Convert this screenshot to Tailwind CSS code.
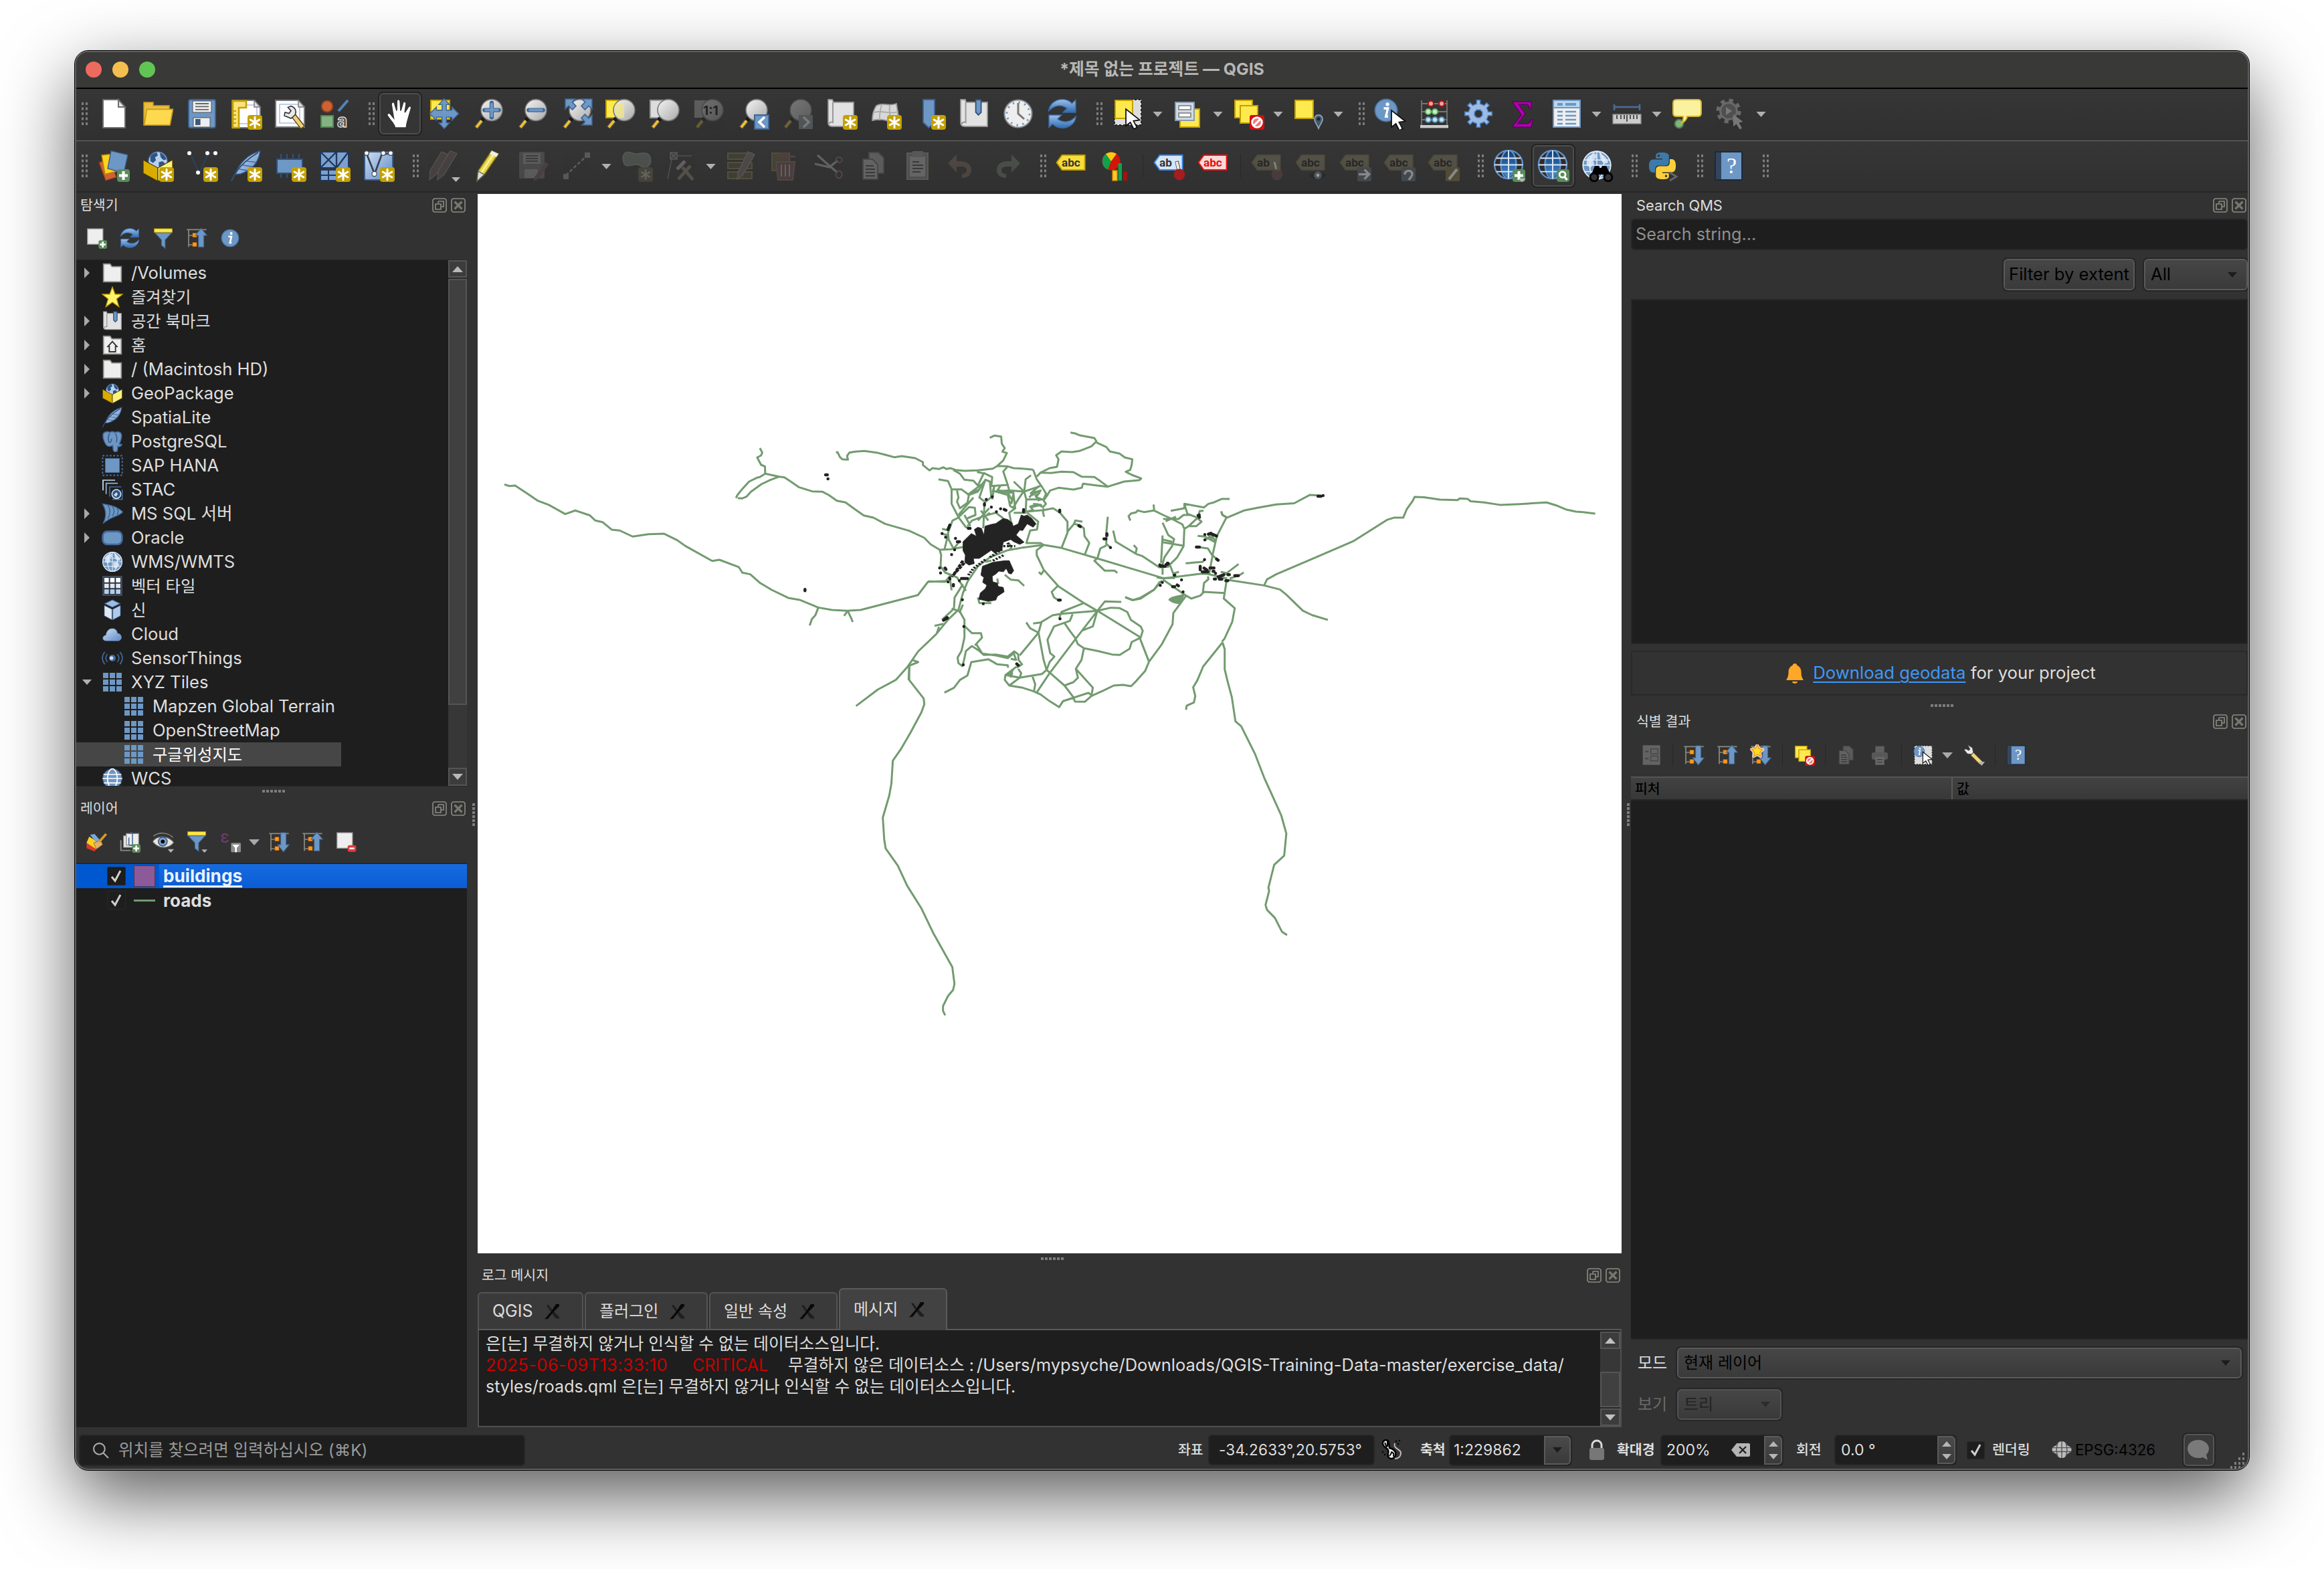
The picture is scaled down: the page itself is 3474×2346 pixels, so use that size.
<!DOCTYPE html>
<html lang="ko">
<head>
<meta charset="utf-8">
<title>QGIS</title>
<script src="https://cdn.jsdelivr.net/npm/@tailwindcss/browser@4"></script>
</head>
<body class="flex h-[2346px] w-[3474px] overflow-hidden bg-white pt-[76px] pl-[112px] [font-family:Inter,'Noto_Sans_CJK_KR',sans-serif] text-[#dedede]">

<svg class="absolute h-0 w-0" aria-hidden="true">
<defs>
  <linearGradient id="gLens" x1="0" y1="0" x2="1" y2="1"><stop offset="0" stop-color="#f4f4f4"/><stop offset=".5" stop-color="#cfcfcf"/><stop offset="1" stop-color="#a9a9a9"/></linearGradient>
  <linearGradient id="gBlue" x1="0" y1="0" x2="1" y2="1"><stop offset="0" stop-color="#cfdff2"/><stop offset="1" stop-color="#5b8ac6"/></linearGradient>
  <linearGradient id="gBlueV" x1="0" y1="0" x2="0" y2="1"><stop offset="0" stop-color="#9cc0ea"/><stop offset="1" stop-color="#2f6cb3"/></linearGradient>
  <linearGradient id="gGlobe" x1="0" y1="0" x2="0" y2="1"><stop offset="0" stop-color="#0a3f7a"/><stop offset="1" stop-color="#4a8fd4"/></linearGradient>

  <!-- badges, drawn in the lower right corner -->
  <symbol id="b-new" viewBox="0 0 24 24"><rect x="13" y="13" width="11" height="11" rx="2" fill="#c4a000"/><path d="M18.5 14.6v7.8M15.1 16.5l6.8 4M15.1 20.5l6.8-4" stroke="#fff" stroke-width="1.5" stroke-linecap="round"/></symbol>
  <symbol id="b-plus" viewBox="0 0 24 24"><rect x="14.5" y="14.5" width="9.5" height="9.5" rx="2" fill="#5a8c5a"/><path d="M19.25 16v6.5M16 19.25h6.5" stroke="#fff" stroke-width="2"/></symbol>
  <symbol id="b-no" viewBox="0 0 24 24"><rect x="13" y="13" width="11" height="11" rx="1.5" fill="#cc1111"/><circle cx="18.5" cy="18.5" r="3.7" fill="#ef7f7f" stroke="#fff" stroke-width="1.4"/><path d="M16 21l5-5" stroke="#fff" stroke-width="1.5"/></symbol>
  <symbol id="b-drop" viewBox="0 0 24 24"><path d="M17.5 20.5h6.5l-3.2 3.5z" fill="#b5b5b5"/></symbol>
  <symbol id="cursor" viewBox="0 0 24 24"><path d="M10.5 8.5v12.6l3.3-2.6 2.6 5 2.4-1.2-2.6-4.9 4.6-.7z" fill="#fff" stroke="#111" stroke-width=".9"/></symbol>
  <symbol id="lens" viewBox="0 0 24 24"><path d="M8.7 15.2l-1.6 1.9" stroke="#1a1a1a" stroke-width="3"/><path d="M7 17.2l-4.3 5.3" stroke="#555" stroke-width="3.2"/><path d="M7 17.2l-4 5" stroke="#f5c02c" stroke-width="1.9"/><circle cx="14.5" cy="9.3" r="8" fill="url(#gLens)" stroke="#777" stroke-width=".8"/></symbol>

  <symbol id="i-file" viewBox="0 0 24 24"><path d="M4 1.5h11.5l5 5.5v15.5H4z" fill="#fff" stroke="#6d6d6d"/><path d="M15.5 1.5V7h5z" fill="#e6e6e6" stroke="#6d6d6d"/></symbol>
  <symbol id="i-open" viewBox="0 0 24 24"><path d="M1.5 3.5h7v2.5h12v4H23l-2 10.5H1.5z" fill="#e9bf3d" stroke="#c79a1a" stroke-width=".8"/><path d="M3.8 8.7h19.4l-2.2 11.8H1.8z" fill="#fcd94f" stroke="#c79a1a" stroke-width=".8"/></symbol>
  <symbol id="i-save" viewBox="0 0 24 24"><rect x="2" y="1.5" width="20" height="21" rx="1.5" fill="#6d97c4" stroke="#3f6491"/><rect x="5" y="2.5" width="14" height="8.5" fill="#eee" stroke="#555" stroke-width=".5"/><path d="M7 4.5h10M7 6.700h10M7 8.900h10" stroke="#666" stroke-width=".9"/><rect x="5.500" y="15" width="12.500" height="7" fill="#eee" stroke="#555" stroke-width=".5"/><rect x="7" y="16" width="3.800" height="4.500" fill="#39587c"/></symbol>
  <symbol id="i-layout" viewBox="0 0 24 24"><path d="M1.500 2H18l4.500 5v15.500h-21z" fill="#fff" stroke="#777"/><path d="M4.500 5.500H20v14H4.500z" fill="none" stroke="#aebfe8" stroke-width=".8"/><path d="M18 2v5h4.500z" fill="#ddd" stroke="#777" stroke-width=".7"/><path d="M2 2.500h10v5H6.500v15H2z" fill="#fce47a" stroke="#c4a000" stroke-width="1.300"/><path d="M2 10h2.500M2 13h2.500M2 16h2.500M2 19h2.500" stroke="#c4a000"/><use href="#b-new"/></symbol>
  <symbol id="i-layoutmgr" viewBox="0 0 24 24"><path d="M1 2h17l4.500 5v15H1z" fill="#fff" stroke="#777"/><path d="M4 5h15v14H4z" fill="none" stroke="#aebfe8" stroke-width=".8"/><path d="M18 2v5h4.500z" fill="#ddd" stroke="#777" stroke-width=".7"/><path d="M14 13l7.500 9.500" stroke="#5b4a1c" stroke-width="4"/><path d="M14 13l7 9" stroke="#f0d17a" stroke-width="2.600"/><path d="M15.500 13l-3 2.500-5-2 .5-2.500 3 .8 1.500-2-2.300-2.500 2.300-1c3 1 4.500 3.500 3 6.700z" fill="#e8e8e8" stroke="#333" stroke-width=".8"/></symbol>
  <symbol id="i-style" viewBox="0 0 24 24"><circle cx="6.500" cy="6.500" r="4.200" fill="#cf6234" stroke="#8e4020"/><path d="M15 10l7-8" stroke="#5383bd" stroke-width="2"/><rect x="2" y="13.500" width="9" height="8.500" fill="#86b183" stroke="#4e8a4c"/><text x="14" y="22" font-family="Inter" font-weight="700" font-size="13" fill="#444" stroke="#ddd" stroke-width=".7">a</text></symbol>
  <symbol id="i-hand" viewBox="0 0 24 24"><path d="M8.200 22.500c0-3-4.700-6.500-5.700-9.200-.5-1.500 1.200-2.300 2.300-1l2.400 2.900L5.500 5c-.2-1.800 2-2.200 2.400-.6l1.600 5.400.1-7c0-1.900 2.300-1.900 2.500 0l.4 7 1.700-5.800c.5-1.600 2.500-1.100 2.300.6l-.9 6.400 2.600-4c1-1.400 2.500-.5 2.100 1l-2.200 7.600c-.5 2.200-1.400 4-1.400 6.900z" fill="#fff" stroke="#333" stroke-width=".8"/></symbol>
  <symbol id="i-pansel" viewBox="0 0 24 24"><rect x="2" y="2" width="14" height="14" fill="#fee94e" stroke="#c4a000"/><path d="M12 .8l4 4.400h-2.400v4.200h4.200V7l5 5-5 5v-2.400h-4.200v4.200H16l-4 4.400-4-4.400h2.400v-4.200H6.200V17l-5-5 5-5v2.400h4.200V5.200H8z" fill="#6d97c4" stroke="#3f6491" stroke-width=".7"/></symbol>
  <symbol id="i-zin" viewBox="0 0 24 24"><use href="#lens"/><path d="M14.500 4v10.600M9.200 9.300h10.600" stroke="#3f6491" stroke-width="3.200" stroke-linecap="round"/><path d="M14.500 4v10.600M9.200 9.300h10.600" stroke="#6d97c4" stroke-width="2"/></symbol>
  <symbol id="i-zout" viewBox="0 0 24 24"><use href="#lens"/><path d="M9.200 9.300h10.600" stroke="#3f6491" stroke-width="3.200" stroke-linecap="round"/><path d="M9.200 9.300h10.600" stroke="#6d97c4" stroke-width="2"/></symbol>
  <symbol id="i-zfull" viewBox="0 0 24 24"><use href="#lens"/><path d="M3.500 1H11L8.700 3.300l2.800 3L8.800 9 6 6.100 3.500 8.500zM23.500 1H16l2.300 2.300-2.800 3L18.200 9 21 6.100l2.500 2.400zM23.500 20.500H16l2.300-2.300-2.800-3 2.700-2.700 2.800 2.900 2.500-2.400z" fill="#6d97c4" stroke="#3f6491" stroke-width=".8"/></symbol>
  <symbol id="i-zsel" viewBox="0 0 24 24"><rect x="1" y="2" width="13" height="13" fill="#fee94e" stroke="#c4a000"/><use href="#lens"/><path d="M8.500 4.500h6v10.500h-4A7.500 7.500 0 0 1 8.500 4.500z" fill="#f0e58a" opacity=".8"/></symbol>
  <symbol id="i-zlayer" viewBox="0 0 24 24"><rect x="1" y="2" width="13" height="13" fill="#ddd" stroke="#999"/><use href="#lens"/></symbol>
  <symbol id="i-znative" viewBox="0 0 24 24"><g opacity=".3"><rect x="1" y="2" width="13" height="13" fill="#bbb"/><use href="#lens"/></g><text x="7.500" y="13" font-family="Inter" font-weight="700" font-size="9.500" fill="#222">1:1</text></symbol>
  <symbol id="i-zlast" viewBox="0 0 24 24"><use href="#lens"/><rect x="13" y="13" width="10.500" height="10.500" fill="#6d97c4" stroke="#3f6491"/><path d="M20.500 14.500l-4 3.800 4 3.800" fill="none" stroke="#fff" stroke-width="1.800"/></symbol>
  <symbol id="i-znext" viewBox="0 0 24 24"><g opacity=".35"><use href="#lens"/><rect x="13" y="13" width="10.500" height="10.500" fill="#8b959c"/><path d="M16.500 14.500l4 3.800-4 3.800" fill="none" stroke="#fff" stroke-width="1.800"/></g></symbol>
  <symbol id="i-mapnew" viewBox="0 0 24 24"><path d="M2 1.500h3l1 2h15v18H5c-2 0-3-1-3-2.500z" fill="#e2e2e2" stroke="#999" stroke-width=".9"/><path d="M5.500 3.500v15c-1.500-.5-3 0-3 1.500" fill="none" stroke="#999"/><use href="#b-new"/></symbol>
  <symbol id="i-map3d" viewBox="0 0 24 24"><path d="M5 6c5-3 8 1 15-1.500l2 13c-6 3-9-3-20-.5 0-4 1-8 3-11z" fill="#d8d8d8" stroke="#999" stroke-width=".9"/><path d="M3.500 11c6-2 10 2 18-.5M9 5c-1 4-2 8-1.500 12M15 5.500c-.5 4 0 8 .5 12" fill="none" stroke="#aaa" stroke-width=".9"/><use href="#b-new"/></symbol>
  <symbol id="i-bknew" viewBox="0 0 24 24"><path d="M7 1.500h8.500v20L11.200 18z" fill="#6d97c4" stroke="#3f6491" stroke-width=".9"/><path d="M7 1.500h8.500v17l-4.300 4-4.200-4z" fill="#6d97c4" stroke="#3f6491" stroke-width=".9"/><use href="#b-new"/></symbol>
  <symbol id="i-bk" viewBox="0 0 24 24"><path d="M2 1.500h3.500l.5 2h16v18H5c-2 0-3-1-3-2.500z" fill="#e2e2e2" stroke="#999" stroke-width=".9"/><path d="M5.800 3.500v15c-1.500-.5-3 0-3 1.500" fill="none" stroke="#999"/><path d="M13.300 1.500h4v9.500l-2 2-2-2z" fill="#6d97c4" stroke="#2f4f78" stroke-width=".9"/></symbol>
  <symbol id="i-clock" viewBox="0 0 24 24"><circle cx="12" cy="12" r="10.300" fill="#eee" stroke="#8a8a8a"/><circle cx="12" cy="12" r="8.500" fill="none" stroke="#6d97c4" stroke-width="1.400" stroke-dasharray="1.200 3.250"/><path d="M12 4v8l4.500 4" fill="none" stroke="#777" stroke-width="1.500"/></symbol>
  <symbol id="i-refresh" viewBox="0 0 24 24"><path d="M1.800 10C2.300 4.500 7 1.300 12 1.300c3.200 0 5.600 1.200 7.200 3l2.800-2.500V11h-9.500l3-3C11 4.800 6 5.500 1.800 10z" fill="url(#gBlueV)" stroke="#3a6ba8" stroke-width=".7"/><path d="M22.200 14c-.5 5.500-5.200 8.700-10.200 8.700-3.200 0-5.600-1.200-7.200-3L2 22.200V13h9.500l-3 3c4.500 3.200 9.500 2.500 13.700-2z" fill="url(#gBlueV)" stroke="#3a6ba8" stroke-width=".7"/></symbol>
  <symbol id="i-select" viewBox="0 0 24 24"><rect x="2" y="1.500" width="20" height="19" fill="#ddd" stroke="#222" stroke-dasharray="1.500 1.500"/><rect x="2.500" y="2" width="13" height="13.500" fill="#fee94e" stroke="#c4a000"/><use href="#cursor"/></symbol>
  <symbol id="i-selform" viewBox="0 0 24 24"><rect x="6" y="8.500" width="14.500" height="13.500" fill="#fee94e" stroke="#c4a000"/><rect x="2.500" y="3.500" width="14" height="13.500" fill="#cfdbe8" stroke="#8a9bb0"/><rect x="5" y="6" width="9" height="3" fill="#fff" stroke="#8a8a8a" stroke-width=".9"/><rect x="5" y="11.500" width="9" height="3" fill="#fff" stroke="#8a8a8a" stroke-width=".9"/></symbol>
  <symbol id="i-desel" viewBox="0 0 24 24"><rect x="2" y="2" width="13" height="13" fill="#fee94e" stroke="#c4a000"/><rect x="6" y="6" width="13" height="13" fill="#fee94e" stroke="#c4a000"/><use href="#b-no"/></symbol>
  <symbol id="i-selloc" viewBox="0 0 24 24"><rect x="2" y="2" width="13.500" height="13.500" fill="#fee94e" stroke="#c4a000"/><path d="M19.500 23c-1-3-3-4.500-3-7a3 3 0 0 1 6 0c0 2.500-2 4-3 7z" fill="#456" stroke="#88a5bb" stroke-width=".9"/><circle cx="19.500" cy="16" r="1.200" fill="#222"/></symbol>
  <symbol id="i-info" viewBox="0 0 24 24"><circle cx="12" cy="12" r="9.500" fill="#6d97c4" stroke="#4a75ad"/><circle cx="13.200" cy="6.800" r="1.500" fill="#fff"/><path d="M10 10.300h3.500l-1.700 7h1.900" fill="none" stroke="#fff" stroke-width="1.900"/></symbol>
  <symbol id="i-identify" viewBox="0 0 24 24"><use href="#i-info" x="-1.500" y="-1" width="21" height="21"/><use href="#cursor" x="2.500" y="1"/></symbol>
  <symbol id="i-abacus" viewBox="0 0 24 24"><path d="M2.500 2v19M21.500 2v19M2.500 4.500h19M2.500 10.500h19M2.500 16.500h19" stroke="#777" stroke-width=".9"/><rect x="1.500" y="20.500" width="21" height="2.200" fill="#ccc"/><g stroke-width="1"><circle cx="9.500" cy="4.500" r="2" fill="#f2a0a0" stroke="#b11"/><circle cx="17.500" cy="4.500" r="2" fill="#f2a0a0" stroke="#b11"/><circle cx="7.500" cy="10.500" r="2" fill="#c7f0c7" stroke="#6b6"/><circle cx="12.500" cy="10.500" r="2" fill="#c7f0c7" stroke="#6b6"/><circle cx="7.500" cy="16.500" r="2" fill="#c5e3f7" stroke="#58a"/><circle cx="12.500" cy="16.500" r="2" fill="#c5e3f7" stroke="#58a"/><circle cx="17.500" cy="16.500" r="2" fill="#c5e3f7" stroke="#58a"/></g></symbol>
  <symbol id="i-gear" viewBox="0 0 24 24"><g fill="none"><circle cx="12" cy="12" r="5.300" stroke="#4a7fc8" stroke-width="4.800"/><path d="M12 1.500v21M1.500 12h21M4.600 4.600l14.800 14.800M19.400 4.600L4.600 19.400" stroke="#4a7fc8" stroke-width="3.400"/><path d="M12 2.300v19.400M2.300 12h19.400M5.200 5.200l13.600 13.600M18.800 5.200L5.200 18.800" stroke="#9dbce4" stroke-width="1.900"/><circle cx="12" cy="12" r="5.300" stroke="#9dbce4" stroke-width="3.400"/></g><circle cx="12" cy="12" r="3" fill="#333" stroke="#4a7fc8" stroke-width=".8"/></symbol>
  <symbol id="i-sigma" viewBox="0 0 24 24"><path d="M5 3h13.500v5h-1.300C16.700 5.500 16 5 14 5H9l5 7-5.800 7.500H15c2 0 2.800-1 3.300-3h1.200L18.500 22H5v-1.200L11.200 13 5 4.200z" fill="#b000b0" stroke="#600060" stroke-width=".7"/></symbol>
  <symbol id="i-table" viewBox="0 0 24 24"><rect x="2" y="2" width="20" height="20" fill="#eee" stroke="#6d97c4"/><rect x="2.500" y="2.500" width="19" height="5" fill="#b9d7ee"/><path d="M5 5h4M11 5h8" stroke="#6d97c4" stroke-width="2"/><path d="M2 7.500h20" stroke="#6d97c4"/><path d="M5 10.500h4M11 10.500h8M5 13.500h4M11 13.500h8M5 16.500h4M11 16.500h8M5 19.500h4M11 19.500h8" stroke="#6d97c4" stroke-width="1.300"/></symbol>
  <symbol id="i-ruler" viewBox="0 0 24 24"><path d="M2.500 7h19M2.500 5v4.500M21.500 5v4.500" stroke="#4c6d99" stroke-width="1.300"/><rect x="1.500" y="12.500" width="21" height="7" fill="#ccc" stroke="#8a8a8a" stroke-width=".7"/><path d="M4.500 13v3M7.500 13v3M10 13v3M12 13v5M14.500 13v3M17 13v3M19.500 13v3" stroke="#444" stroke-width=".9"/></symbol>
  <symbol id="i-tip" viewBox="0 0 24 24"><circle cx="6" cy="19.500" r="3.200" fill="#7fb47d" stroke="#4e7a4c"/><path d="M4 1.500h16c1.500 0 2.500 1 2.500 2.500v7.500c0 1.500-1 2.500-2.500 2.500h-8c0 2-2 4-4 5 1-1.500 1.200-3 1-5H4c-1.500 0-2.500-1-2.500-2.500V4c0-1.500 1-2.500 2.500-2.500z" fill="#fbf2a0" stroke="#d8b62c"/></symbol>
  <symbol id="i-action" viewBox="0 0 24 24"><g opacity=".45"><circle cx="10" cy="10" r="7.800" fill="none" stroke="#aaa" stroke-width="3" stroke-dasharray="3 3.130"/><circle cx="10" cy="10" r="6.200" fill="#6b7378" stroke="#aaa" stroke-width="1.500"/><path d="M8 7l4.500 3L8 13z" fill="#ccc"/><path d="M13.500 12.500v9l2.300-1.700 2.500 4 1.700-1-2.300-4 3-.8z" fill="#ccc"/></g></symbol>

  <symbol id="i-layers" viewBox="0 0 24 24"><path d="M1 9.500l8-3 5 14-8 2.500z" fill="#cf6234" stroke="#8e3c1a" stroke-width=".7"/><path d="M3 4l9-1 2.500 13-9 2.200z" fill="#fbd21f" stroke="#b48a00" stroke-width=".7"/><path d="M10 .8l12.500 3-3 13.500L7.500 14z" fill="#6d97c4" stroke="#3a5c88" stroke-width=".7"/><use href="#b-plus"/></symbol>
  <symbol id="i-globe" viewBox="0 0 24 24"><circle cx="12" cy="12" r="10" fill="#b9d1ec" stroke="#3f6491"/><path d="M4 7c2-3 5-4 7-4l1 3-3 2 1 3-3 3-3-2zM14 3c4 1 6 4 7 7l-3 1-3-3zM13 13l4-1 3 3-4 5-3-2z" fill="#2f5585"/></symbol>
  <symbol id="i-gpkg" viewBox="0 0 24 24"><use href="#i-globe" x="3.500" y="0" width="17" height="17"/><path d="M1 7.500l11 6v10l-11-6z" fill="#d8ac00" stroke="#4a3900" stroke-width=".6"/><path d="M23 7.500l-11 6v10l11-6z" fill="#fff27a" stroke="#4a3900" stroke-width=".6"/></symbol>
  <symbol id="i-gpkgnew" viewBox="0 0 24 24"><use href="#i-gpkg"/><use href="#b-new"/></symbol>
  <symbol id="i-vnew" viewBox="0 0 24 24"><path d="M3 2.500l7 15 6.500-14.500M16.500 2.500H22" fill="none" stroke="#2c3f58" stroke-width="1.200"/><g fill="#fff"><circle cx="2.500" cy="2.500" r="1.500"/><circle cx="9" cy="17" r="1.500"/><circle cx="16" cy="2.500" r="1.500"/><circle cx="22" cy="2.500" r="1.500"/></g><use href="#b-new"/></symbol>
  <symbol id="i-feather" viewBox="0 0 24 24"><path d="M22.500.8C14 3 6 10 4 18.500l4-.5c9-3 13.500-9 14.500-17.200z" fill="url(#gBlue)" stroke="#2f4f78" stroke-width=".8"/><path d="M1 23.500C4 15 11 8 21 2" fill="none" stroke="#2f4f78"/><path d="M7 14.500l6 1M9.500 11.500l7 1M12.500 8.500l7 .8" stroke="#44699a" stroke-width=".7"/></symbol>
  <symbol id="i-feathernew" viewBox="0 0 24 24"><use href="#i-feather"/><use href="#b-new"/></symbol>
  <symbol id="i-memnew" viewBox="0 0 24 24"><path d="M5 3v18M9.500 3v18M14 3v18M18.500 3v18" stroke="#31507a" stroke-width="1"/><rect x="2" y="7" width="19" height="10.500" fill="#6d97c4" stroke="#31507a"/><use href="#b-new"/></symbol>
  <symbol id="i-meshnew" viewBox="0 0 24 24"><rect x="1.500" y="1.500" width="21" height="12" fill="#7ba1d0" stroke="#22385a"/><path d="M1.500 1.500l12 12M13.500 1.500l-12 12M13.500 1.500v12l9-12" fill="none" stroke="#22385a" stroke-width="1.200"/><rect x="1.500" y="15" width="12" height="8" fill="#7ba1d0" stroke="#22385a"/><path d="M7.500 15v8M1.500 19h12" stroke="#22385a"/><use href="#b-new"/></symbol>
  <symbol id="i-gpxnew" viewBox="0 0 24 24"><rect x="1.500" y="1.500" width="21" height="21" rx="1" fill="url(#gBlue)" stroke="#3a5c88"/><path d="M3 3l6 15 5.500-15h6" fill="none" stroke="#333f50" stroke-width="1.300"/><g fill="#fff" stroke="#445" stroke-width=".6"><circle cx="3" cy="2.500" r="1.700"/><circle cx="8.800" cy="18" r="1.800"/><circle cx="15.500" cy="2.500" r="1.700"/><circle cx="21" cy="2.500" r="1.700"/></g><use href="#b-new"/></symbol>
  <symbol id="i-pencil" viewBox="0 0 24 24"><path d="M14.500.8l5 2.200L9 18.500l-5.500 5 .8-7.500z" fill="#e8d64b" stroke="#8a7a10" stroke-width=".8"/><path d="M16.800 2L6.500 17.500" stroke="#fff8b0"/><path d="M14.500.8l5 2.200-1.500 2.400-5-2.300z" fill="#eee"/><path d="M4.300 16L9 18.500l-5.500 5z" fill="#ddd" stroke="#555" stroke-width=".6"/></symbol>
  <symbol id="i-pencils" viewBox="0 0 24 24"><g opacity=".36"><path d="M10 1.500l5 2L6.500 18 1 22.500l.5-7z" fill="#6a5a54" stroke="#888" stroke-width=".7"/><path d="M16.500.8l5 2L12 18.500l-5 4 .8-7z" fill="#6a5a54" stroke="#888" stroke-width=".7"/></g><path d="M17.500 20.500H24L20.800 24z" fill="#b5b5b5"/></symbol>
  <symbol id="i-saveedit" viewBox="0 0 24 24"><g opacity=".26"><rect x="2" y="1.500" width="19" height="20" rx="1.500" fill="#888" /><rect x="5" y="2.500" width="13" height="8" fill="#ccc"/><path d="M7 4.500h9M7 6.500h9M7 8.500h9" stroke="#555"/><rect x="6" y="14.500" width="10" height="6.500" fill="#ccc"/><path d="M22 9l2 2-8 11-3 1.500.7-3.500z" fill="#866"/></g></symbol>
  <symbol id="i-digit" viewBox="0 0 24 24"><g opacity=".36"><path d="M4 19L20 4" stroke="#aaa" stroke-dasharray="2.500 1.500" stroke-width="1.200"/><rect x="2" y="18" width="4" height="4" fill="#999"/><rect x="18" y="2" width="4" height="4" fill="#999"/></g></symbol>
  <symbol id="i-poly" viewBox="0 0 24 24"><g opacity=".28"><path d="M4 2c4-1 5 2 9 1s8-1 9 3-1 7-4 7-4-3-8-2-7 2-8-2 0-6 2-7z" fill="#8c9a8c" stroke="#aaa"/><rect x="13" y="13" width="11" height="11" rx="2" fill="#7a7346"/><path d="M18.500 14.600v7.800M15.100 16.500l6.800 4M15.100 20.500l6.800-4" stroke="#ddd" stroke-width="1.300"/></g></symbol>
  <symbol id="i-vertex" viewBox="0 0 24 24"><g opacity=".33"><path d="M5 7L2 22M8 4.500h12" stroke="#888" stroke-width=".8"/><rect x="4" y="2" width="5" height="5" fill="#555" stroke="#aaa" stroke-width=".7"/><path d="M4.500 2.500l4 4M8.500 2.500l-4 4" stroke="#aaa" stroke-width=".6"/><path d="M10 22l9-10" stroke="#998f77" stroke-width="2.400"/><path d="M13 13l8 9.500" stroke="#998f77" stroke-width="2.400"/><path d="M9 14.500l6-6" stroke="#bbb" stroke-width="2.600"/></g></symbol>
  <symbol id="i-attr" viewBox="0 0 24 24"><g opacity=".34"><g fill="#56563c" stroke="#8d8650"><rect x="2" y="2.500" width="18" height="4.500"/><rect x="2" y="9.500" width="18" height="4.500"/><rect x="2" y="16.500" width="18" height="5"/></g><path d="M17 1.500l5 2L13 19l-4 3 .5-5z" fill="#80706c" stroke="#999" stroke-width=".7"/></g></symbol>
  <symbol id="i-trash" viewBox="0 0 24 24"><g opacity=".34"><rect x="2" y="2.500" width="13" height="13" fill="#665f3c" stroke="#8a8250"/><path d="M3.500 5h16M8 5V3h6v2" stroke="#8d5555" stroke-width="1.500" fill="none"/><path d="M5 9h14l-1.500 13.500h-11z" fill="#7d5353" stroke="#9a6a6a"/><path d="M9 11v9M12 11v9M15 11v9" stroke="#bbb"/></g></symbol>
  <symbol id="i-cut" viewBox="0 0 24 24"><g opacity=".34" fill="none"><path d="M1 10.500l11 2.500 6-5" stroke="#bbb" stroke-width="1.600"/><path d="M3 4l9 8 6 5" stroke="#bbb" stroke-width="1.600"/><ellipse cx="19" cy="18.500" rx="2.300" ry="2.800" stroke="#9a6a6a"/><ellipse cx="19" cy="7.500" rx="2.300" ry="2" stroke="#9a6a6a"/></g></symbol>
  <symbol id="i-copy" viewBox="0 0 24 24"><g opacity=".4"><path d="M8.500 2h7l4 4v11.500h-11z" fill="#999" stroke="#666"/><path d="M4 7h7l4 4v11H4z" fill="#aaa" stroke="#666"/><path d="M6 12h6M6 14.500h7M6 17h7M6 19.500h7" stroke="#444"/></g></symbol>
  <symbol id="i-paste" viewBox="0 0 24 24"><g opacity=".42"><rect x="4" y="2.500" width="15.500" height="19.500" fill="#777" stroke="#9a8f7d"/><rect x="6" y="5" width="11.500" height="15" fill="#aaa"/><rect x="8" y="1" width="8" height="4.500" fill="#888"/><path d="M8 9h5M8 11.500h8M8 14h8M8 16.500h6" stroke="#444"/></g></symbol>
  <symbol id="i-undo" viewBox="0 0 24 24"><path d="M8 3.500v5h3c5 0 8 3 8 6.500 0 4-3 6-7 6v-3c2 0 3.500-1 3.500-2.800S14 12.500 11 12.500H8v4.500l-6.500-7z" fill="#8d7160" opacity=".3"/></symbol>
  <symbol id="i-redo" viewBox="0 0 24 24"><path d="M16 3.500v5h-3c-5 0-8 3-8 6.500 0 4 3 6 7 6v-3c-2 0-3.500-1-3.500-2.800s1.500-2.700 4.500-2.700h3v4.500l6.500-7z" fill="#7e8c7a" opacity=".3"/></symbol>

  <symbol id="tag" viewBox="0 0 24 24"><path d="M.8 9.500l4-5.500h17v11h-17z"/></symbol>
  <symbol id="i-abc" viewBox="0 0 24 24"><use href="#tag" fill="#f7de3a" stroke="#c4a000"/><text x="4.500" y="12.600" font-family="Roboto" font-weight="700" font-size="8.600" fill="#333">abc</text></symbol>
  <symbol id="i-diagram" viewBox="0 0 24 24"><circle cx="8.500" cy="8.500" r="6.800" fill="#d11507"/><path d="M8.500 8.500L5 2.800A6.800 6.800 0 0 0 6 14.800z" fill="#12a04a"/><path d="M8.500 8.500L4.500 3a6.800 6.800 0 0 1 8 0z" fill="#fbc714"/><path d="M9.500 15.500h3.500v7.500H9.500z" fill="#ffc92e" stroke="#d08a00" stroke-width=".7"/><path d="M13.800 10h2.700v13h-2.700z" fill="#12a04a"/><path d="M17.500 16.500h3V23h-3z" fill="#a31111"/></symbol>
  <symbol id="i-abpin" viewBox="0 0 24 24"><use href="#tag" fill="#d5e7fb" stroke="#3a87e8"/><text x="4.500" y="12.600" font-family="Roboto" font-weight="700" font-size="8.600" fill="#333">ab</text><path d="M17.500 8.500l1.500 6.500" stroke="#555" stroke-width="2.800"/><path d="M17.500 9l1.500 6" stroke="#eee" stroke-width="1.800"/><circle cx="19.500" cy="18.500" r="4.200" fill="#a51d1d"/></symbol>
  <symbol id="i-abcred" viewBox="0 0 24 24"><use href="#tag" fill="#fbd9d9" stroke="#f01010"/><text x="4.500" y="12.600" font-family="Roboto" font-weight="700" font-size="8.600" fill="#e01010">abc</text></symbol>
  <symbol id="abcoff" viewBox="0 0 24 24"><g opacity=".36"><use href="#tag" fill="#8a8668" stroke="#77744f"/><text x="4.500" y="12.600" font-family="Roboto" font-weight="700" font-size="8.600" fill="#111">abc</text></g></symbol>
  <symbol id="i-lpin" viewBox="0 0 24 24"><g opacity=".36"><use href="#tag" fill="#8a8668" stroke="#77744f"/><text x="4.500" y="12.600" font-family="Roboto" font-weight="700" font-size="8.600" fill="#111">ab</text></g><g opacity=".4"><path d="M17.500 9l1.500 6" stroke="#ccc" stroke-width="1.500"/><circle cx="19.500" cy="18.500" r="4.200" fill="#6d4a4a"/></g></symbol>
  <symbol id="i-leye" viewBox="0 0 24 24"><use href="#abcoff"/><path d="M10 19c3-3.500 10-3.500 13 0-3 4-10 4-13 0z" fill="#2a2a2a"/><circle cx="17" cy="19" r="3" fill="#4a525a"/><circle cx="17" cy="19" r="1.200" fill="#999"/></symbol>
  <symbol id="i-lmove" viewBox="0 0 24 24"><use href="#abcoff"/><rect x="13.500" y="13" width="10.500" height="10.500" rx="1" fill="#43484c"/><path d="M14.500 18.300h7M18.800 14.800l3.500 3.500-3.500 3.500" fill="none" stroke="#888" stroke-width="1.700"/></symbol>
  <symbol id="i-lrot" viewBox="0 0 24 24"><use href="#abcoff"/><rect x="13.500" y="13" width="10.500" height="10.500" rx="1" fill="#43484c"/><path d="M16 18.500c0-4 6-3.500 5.500 0 0 1.500-1.500 2-2.500 4" fill="none" stroke="#888" stroke-width="1.700"/></symbol>
  <symbol id="i-ledit" viewBox="0 0 24 24"><use href="#abcoff"/><rect x="13.500" y="13" width="10.500" height="10.500" rx="1" fill="#504c38"/><path d="M22 14.500l-6 7.500" stroke="#888" stroke-width="2"/></symbol>
  <symbol id="wire" viewBox="0 0 24 24"><circle cx="12" cy="11.500" r="11" fill="#2f2b29"/><path d="M12 .5c-8 6-8 16 0 22 8-6 8-16 0-22z" fill="url(#gGlobe)"/><g fill="none" stroke="#5f93cf" stroke-width="1.200"><circle cx="12" cy="11.500" r="11"/><ellipse cx="12" cy="11.500" rx="6" ry="11"/></g><path d="M12 .5v22M2.500 6.500h19M1 11.700h22M2.500 17h19" stroke="#dfe9f5" stroke-width="1"/></symbol>
  <symbol id="i-wadd" viewBox="0 0 24 24"><use href="#wire" width="23" height="23"/><use href="#b-plus"/><path d="M18.500 21.500h6L21.500 24z" fill="#bbb"/></symbol>
  <symbol id="i-wsearch" viewBox="0 0 24 24"><use href="#wire" width="23" height="23"/><rect x="14.500" y="14.500" width="9.500" height="9.500" rx="2" fill="#5a8c5a"/><circle cx="18.800" cy="18.500" r="2.200" fill="none" stroke="#fff" stroke-width="1.400"/><path d="M20.300 20.200l2 2.300" stroke="#fff" stroke-width="1.600"/></symbol>
  <symbol id="i-wms" viewBox="0 0 24 24"><circle cx="12" cy="12" r="10.800" fill="#6d97c4" stroke="#dce8f5"/><path d="M4 7c2-3 5-4 7-4l1 3-3 2 1 3-3 3-3-2zM14 3c4 1 6 4 7 7l-3 1-3-3zM13 13l4-1 3 3-4 5-3-2z" fill="#cfdff2"/><g fill="none" stroke="#e6eff9" stroke-width=".8"><ellipse cx="12" cy="12" rx="5.500" ry="10.800"/><path d="M12 1v22M2 8h20M1 12h22M2.500 17h19"/></g></symbol>
  <symbol id="i-wbin" viewBox="0 0 24 24"><use href="#i-wms" width="23" height="23"/><path d="M10 12h3l.8 1.500h1L15.500 12h3l3.500 7v2h-5v-2.500h-5V21H6.500z" fill="#000"/><circle cx="9.500" cy="20.500" r="3" fill="#333" stroke="#000" stroke-width="1.400"/><circle cx="20" cy="20.500" r="3" fill="#333" stroke="#000" stroke-width="1.400"/></symbol>
  <symbol id="i-wcs" viewBox="0 0 24 24"><circle cx="12" cy="12" r="10.800" fill="#6d97c4" stroke="#2f4f78"/><g fill="none" stroke="#fff" stroke-width="1.300"><ellipse cx="12" cy="12" rx="5.500" ry="10.800"/><path d="M2 7.500h20M1 12h22M2.500 17h19"/></g></symbol>
  <symbol id="py" viewBox="0 0 24 24"><path d="M14.250.18l.9.200.73.260.59.300.45.320.34.340.25.340.16.330.1.300.04.260.02.200-.01.130V8.500l-.05.630-.13.550-.21.460-.26.380-.3.310-.33.250-.35.190-.35.140-.33.100-.3.070-.26.040-.21.020H8.770l-.69.050-.59.140-.5.220-.41.270-.33.320-.27.350-.2.360-.15.370-.1.350-.07.320-.04.270-.02.210v3.060H3.170l-.21-.03-.28-.07-.32-.12-.35-.18-.36-.26-.36-.36-.35-.46-.32-.59-.28-.73-.21-.88-.14-1.050-.05-1.230.06-1.220.16-1.040.24-.87.32-.71.36-.57.4-.44.42-.33.42-.24.4-.16.36-.1.32-.05.24-.01h.16l.06.01h8.160v-.83H6.180l-.01-2.750-.02-.37.05-.34.11-.31.17-.28.25-.26.31-.23.38-.2.44-.18.51-.15.58-.12.64-.1.71-.06.77-.04.84-.02 1.270.05zm-6.300 1.980l-.23.330-.08.410.08.410.23.340.33.220.41.090.41-.09.33-.22.23-.34.08-.41-.08-.41-.23-.33-.33-.22-.41-.09-.41.090z"/></symbol>
  <symbol id="i-python" viewBox="0 0 24 24"><use href="#py" x="1.500" y="2" width="20" height="20" fill="#3d7aab"/><g transform="rotate(180 11.500 12)"><use href="#py" x="1.500" y="2" width="20" height="20" fill="#fdd03b"/></g><path d="M17 17l5 3-5 3" fill="none" stroke="#666" stroke-width="1.400"/></symbol>
  <symbol id="i-help" viewBox="0 0 24 24"><rect x="2" y="1.500" width="20" height="21" fill="#6d97c4" stroke="#1c2a3c"/><rect x="2.500" y="2" width="4" height="20" fill="#31465e"/><text x="10.500" y="17.500" font-family="Liberation Serif" font-size="17" fill="#fff">?</text></symbol>

  <symbol id="i-add" viewBox="0 0 24 24"><rect x="2" y="1.500" width="17.500" height="17.500" fill="#eee" stroke="#8a8a8a"/><use href="#b-plus"/></symbol>
  <symbol id="i-remove" viewBox="0 0 24 24"><rect x="2" y="1.500" width="17.500" height="17.500" fill="#eee" stroke="#8a8a8a"/><rect x="14" y="15.500" width="9.500" height="7.500" rx="2" fill="#e03c3c"/><path d="M16 19.200h5.500" stroke="#fff" stroke-width="1.800"/></symbol>
  <symbol id="i-filter" viewBox="0 0 24 24"><path d="M2.500 6h19l-7.300 8v9.500L10 20v-6z" fill="#6d97c4" stroke="#3f6491" stroke-width=".8"/><rect x="2" y="1.500" width="20" height="4" fill="#fee94e" stroke="#c4a000" stroke-width=".7"/></symbol>
  <symbol id="i-filterd" viewBox="0 0 24 24"><use href="#i-filter" y="-1"/><use href="#b-drop"/></symbol>
  <symbol id="tree" viewBox="0 0 24 24"><path d="M1 2.500h22M3 2.500v19.500M3 9h5M3 19.500h5" stroke="#8a8a83" stroke-width="1.300" fill="none"/><rect x="7.500" y="6.500" width="4.500" height="4.500" fill="#ff9a1c" stroke="#b86000" stroke-width=".5"/><rect x="7.500" y="17" width="4.500" height="4.500" fill="#ff9a1c" stroke="#b86000" stroke-width=".5"/></symbol>
  <symbol id="i-collapse" viewBox="0 0 24 24"><use href="#tree"/><path d="M17 1l6.500 8H20v13h-6V9h-3.500z" fill="#6d97c4" stroke="#3f6491" stroke-width=".8"/></symbol>
  <symbol id="i-expand" viewBox="0 0 24 24"><use href="#tree"/><path d="M17 23l6.500-8H20V1.500h-6V15h-3.500z" fill="#6d97c4" stroke="#3f6491" stroke-width=".8"/></symbol>
  <symbol id="i-expandnew" viewBox="0 0 24 24"><use href="#i-expand"/><path d="M8 .5l2 4.200 4.600.8-3.400 3.400.7 4.700L8 11.400l-4 2.200.7-4.700L1.500 5.500 6 4.700z" fill="#ffe11c" stroke="#fff" stroke-width="2.800" stroke-linejoin="round"/><path d="M8 .5l2 4.200 4.600.8-3.400 3.400.7 4.700L8 11.400l-4 2.200.7-4.700L1.500 5.500 6 4.700z" fill="#ffe11c" stroke="#f7941e" stroke-width="1.200"/></symbol>
  <symbol id="i-brush" viewBox="0 0 24 24"><path d="M1 13l3-7 11 7-4 8z" fill="#fbd21f"/><path d="M5 4l5-1 7 8-4 3z" fill="#7da7d8"/><path d="M1 13l11 7-2 2.500L1 19z" fill="#d93a2b"/><path d="M9 13l8-3 2 5-7 5z" fill="#e5b266" stroke="#8b5a20" stroke-width=".6"/><path d="M15 12l8-9" stroke="#d99a2b" stroke-width="2.600"/></symbol>
  <symbol id="i-group" viewBox="0 0 24 24"><path d="M2 10v11.500h11" fill="none" stroke="#8a8a8a" stroke-width="1.400"/><rect x="5" y="5" width="14" height="13" fill="#eee" stroke="#8a8a8a"/><rect x="8" y="2.500" width="14" height="13" fill="#eee" stroke="#8a8a8a"/><path d="M11 7v7c0 2.500 4 2.500 4 0V3c0-2-3-2-3 0" fill="none" stroke="#3f6491" stroke-width="1.100"/><use href="#b-plus"/></symbol>
  <symbol id="i-eye" viewBox="0 0 24 24"><path d="M0 11.500c5-7.500 17-7.500 24 1-6 7.500-17 8-24-1z" fill="#e8e4df" stroke="#5a5a5a"/><circle cx="11.500" cy="11.500" r="5" fill="#7ba1d0" stroke="#2f4f78"/><circle cx="11.500" cy="11.500" r="2.200" fill="#000"/><path d="M1 5.500C7 .5 17 1 23 7" fill="none" stroke="#8a8a8a"/><path d="M17 20h7l-3.500 4z" fill="#b5b5b5"/></symbol>
  <symbol id="i-expr" viewBox="0 0 24 24"><text x="1" y="13" font-family="Inter" font-weight="500" font-size="19" fill="#6b3a6b">ε</text><rect x="13" y="13" width="11" height="10.500" rx="1" fill="#8d8d8d"/><path d="M14.500 15h8l-3 3.500v5h-2v-5z" fill="#fff"/></symbol>
  <symbol id="i-form" viewBox="0 0 24 24"><rect x="2" y="1" width="19.500" height="22" fill="#777" opacity=".7"/><rect x="11" y="5" width="8" height="5.500" fill="none" stroke="#444"/><rect x="11" y="13" width="8" height="5.500" fill="none" stroke="#444"/><path d="M4.500 8h4M4.500 16h4" stroke="#444" stroke-width="1.500"/></symbol>
  <symbol id="i-print" viewBox="0 0 24 24"><g opacity=".45"><rect x="7" y="2" width="10" height="7" fill="#999"/><rect x="3" y="9" width="18" height="8" rx="2" fill="#888"/><rect x="7" y="14" width="10" height="9" fill="#aaa"/><path d="M9 17h6M9 20h6" stroke="#444"/></g></symbol>
  <symbol id="i-idmode" viewBox="0 0 24 24"><rect x="2" y="1.500" width="20" height="21" fill="#ddd" stroke="#222" stroke-dasharray="1.500 1.500"/><use href="#i-info" x="0" y="0" width="15" height="16"/><use href="#cursor" x="1"/></symbol>
  <symbol id="i-wrench" viewBox="0 0 24 24"><path d="M10 11l10 10" stroke="#b99a3f" stroke-width="4.400"/><path d="M10 11l10 10" stroke="#f0d88a" stroke-width="3"/><path d="M5 .8l5 3.200 1 5-2 2-4.500-.5L.8 6l2-.8 3.200 1.800L7.500 5.500z" fill="#eee" stroke="#555" stroke-width=".6"/><path d="M17 19.500h7L20.500 24z" fill="#b5b5b5"/></symbol>

  <symbol id="t-folder" viewBox="0 0 24 24"><path d="M2 2h7.500l2 3H22v17H2z" fill="#eee" stroke="#8a8a85" stroke-width="1.300"/></symbol>
  <symbol id="t-home" viewBox="0 0 24 24"><use href="#t-folder"/><path d="M12 8l5 5.500h-1.500v6h-7v-6H7z" fill="none" stroke="#333" stroke-width="1.400"/></symbol>
  <symbol id="t-star" viewBox="0 0 24 24"><path d="M12 1l3 8h8.300l-6.600 5.200 2.600 8.800L12 17.800 4.700 23l2.600-8.800L.7 9H9z" fill="#fff66b" stroke="#c4a000"/></symbol>
  <symbol id="t-pg" viewBox="0 0 24 24"><path d="M2 3c2-2 5-2 7-1 2-1 4-1 6 0 3-1 6-1 7 2 .8 4-1 8-2.500 11l3 .5c-1 2-3 2.500-4.500 2l-.5 5c-1 1.500-4 1.500-4.500-1l-.5-5C9 18 6.500 18 5 15.500 2.500 12 .8 6.500 2 3z" fill="#6d97c4" stroke="#4a6f9e" stroke-width="1.200"/><path d="M9 3c-2 3-2 6-1 10 2 1 3-1 3-4M15 3c2 2 2.500 6 1.500 10" fill="none" stroke="#3b5a84" stroke-width="1.200"/></symbol>
  <symbol id="t-hana" viewBox="0 0 24 24"><rect x="1" y="1" width="22" height="22" fill="none" stroke="#44699a" stroke-width="1.600" stroke-dasharray="2 2"/><rect x="4" y="4" width="16" height="16" fill="#6d97c4"/></symbol>
  <symbol id="t-stac" viewBox="0 0 24 24"><g fill="none" stroke-width="1.300"><path d="M1.500 13V1.500H15" stroke="#cfdff2"/><path d="M5 17V5h13" stroke="#8fb2dc"/><path d="M9 20V9h13" stroke="#44699a"/><path d="M12 23h11V12" stroke="#44699a"/></g><circle cx="16.500" cy="17" r="5" fill="#2f5585" stroke="#cfdff2" stroke-width="1.200"/><path d="M13.500 18l3-3 1.500 2-2 3z" fill="#cfdff2"/></symbol>
  <symbol id="t-mssql" viewBox="0 0 24 24"><path d="M1 1c8 1 17 3 22.500 9-3 5-11 4-22 13C6 15 5 8 1 1z" fill="#6d97c4" stroke="#3f6491"/><path d="M7 2.500c3 4 3 10 0 15M12 4c2.500 3 2.500 8 0 10.500M17 6c2 2 2 5 0 7" fill="none" stroke="#3f6491" stroke-width="1.200"/></symbol>
  <symbol id="t-oracle" viewBox="0 0 24 24"><rect x="1.200" y="5" width="21.600" height="14.500" rx="5" fill="#6d97c4" stroke="#44699a" stroke-width="2"/></symbol>
  <symbol id="t-xyz" viewBox="0 0 24 24"><path d="M1.500 1.500h6v6h-6zM9 1.500h6v6H9zM16.500 1.500h6v6h-6zM1.500 9h6v6h-6zM9 9h6v6H9zM16.500 9h6v6h-6zM1.500 16.500h6v6h-6zM9 16.500h6v6H9zM16.500 16.500h6v6h-6z" fill="#6d97c4"/></symbol>
  <symbol id="t-vt" viewBox="0 0 24 24"><rect x="1.500" y="1.500" width="21" height="21" fill="#2a3442" stroke="#5a6f8a" stroke-width=".8"/><path d="M3 3h5v5H3zM9.500 3h5v5h-5zM16 3h5v5h-5z" fill="#fff"/><path d="M3 9.500h5v5H3zM9.500 9.500h5v5h-5zM16 9.500h5v5h-5z" fill="#dfe8f3"/><path d="M3 16h5v5H3zM9.500 16h5v5h-5zM16 16h5v5h-5z" fill="#b9cde6"/></symbol>
  <symbol id="t-scene" viewBox="0 0 24 24"><path d="M12 .8l8.500 4L12 9 3.500 4.800z" fill="#9dbce4" stroke="#44699a" stroke-width=".8"/><path d="M3 7l8.500 4.200V23L3 18.500z" fill="#dfe8f3" stroke="#44699a" stroke-width=".6"/><path d="M21 7l-8.500 4.200V23l8.500-4.500z" fill="#b0cbea" stroke="#44699a" stroke-width=".6"/></symbol>
  <symbol id="t-cloud" viewBox="0 0 24 24"><path d="M5 19.500c-5 0-4.500-6 0-6 0-4 3-8 7.500-7.500 3.500.2 5 3 5 5.500 5-.5 6.500 7.500 1 8z" fill="url(#gBlue)" stroke="#7ba1d0" stroke-width=".6"/></symbol>
  <symbol id="t-sensor" viewBox="0 0 24 24"><circle cx="12" cy="12" r="3.800" fill="#44699a"/><circle cx="11" cy="12" r="2" fill="#cfdff2"/><g fill="none" stroke="#44699a" stroke-width="1.200"><path d="M6.500 7.500c-2.500 3-2.500 6 0 9M17.500 7.500c2.500 3 2.500 6 0 9M3.500 5c-3.500 4.500-3.500 9.500 0 14M20.500 5c3.500 4.500 3.500 9.500 0 14"/></g></symbol>

  <symbol id="grip" viewBox="0 0 10 34"><path d="M1 0h3v4H1zM7 0h3v4H7zM1 7.500h3v4H1zM7 7.500h3v4H7zM1 15h3v4H1zM7 15h3v4H7zM1 22.500h3v4H1zM7 22.500h3v4H7zM1 30h3v4H1zM7 30h3v4H7z" fill="#7d7d7d"/></symbol>
  <symbol id="hdots" viewBox="0 0 34 4"><path d="M0 0h4v4H0zM6 0h4v4H6zM12 0h4v4h-4zM18 0h4v4h-4zM24 0h4v4h-4zM30 0h4v4h-4z" fill="#7d7d7d"/></symbol>
  <symbol id="vdots" viewBox="0 0 4 34"><path d="M0 0v4h4V0zM0 6v4h4V6zM0 12v4h4v-4zM0 18v4h4v-4zM0 24v4h4v-4zM0 30v4h4v-4z" fill="#7d7d7d"/></symbol>
  <symbol id="dd" viewBox="0 0 16 9"><path d="M0 0h16L8 9z"/></symbol>
  <symbol id="float" viewBox="0 0 22 22"><g fill="none" stroke="#8c8c84" stroke-width="1.600"><path d="M3 1h16l2 2v16l-2 2H3l-2-2V3z"/><path d="M9 5h8v8h-4M9 5v3M5 9h8v8H5z"/></g></symbol>
  <symbol id="close" viewBox="0 0 22 22"><path d="M3 1h16l2 2v16l-2 2H3l-2-2V3z" fill="none" stroke="#8c8c84" stroke-width="1.600"/><path d="M5.500 5.500l11 11M16.500 5.500l-11 11" stroke="#77776f" stroke-width="3.200"/></symbol>
  <symbol id="tabx" viewBox="0 0 24 24"><path d="M4 3l3-1 5 7 11 11v3l-6-1z" fill="#1f1f1f"/><path d="M18 1h5v3l-9 9-8 10-5 .5L11 12z" fill="#080808"/></symbol>
  <symbol id="rtri" viewBox="0 0 8 16"><path d="M0 0l8 8-8 8z" fill="#a9a9a9"/></symbol>
</defs>
</svg>

<div class="flex h-[2122px] w-[3250px] flex-col overflow-hidden rounded-[20px] border-2 border-[#616161] bg-[#323232] shadow-[0_40px_110px_rgba(0,0,0,0.65)] outline-1 outline-black">

  <!-- title bar -->
  <div class="relative flex h-[55px] shrink-0 items-center justify-center border-b-2 border-black bg-[#393937] pb-0.5">
    <div class="absolute left-[14px] flex gap-4">
      <div class="size-6 rounded-full bg-[#ed6a5e]"></div><div class="size-6 rounded-full bg-[#f5bf4f]"></div><div class="size-6 rounded-full bg-[#61c554]"></div>
    </div>
    <div class="text-[24.800px] font-bold whitespace-pre text-[#b7b7b5]">*제목 없는 프로젝트 — QGIS</div>
  </div>

  <!-- main toolbar -->
  <div id="tb1" class="flex h-[78px] shrink-0 items-center border-b border-[#6e6e6e] bg-linear-to-b from-[#363636] to-[#303030] pb-[3px]"></div>
  <!-- editing and label toolbar -->
  <div id="tb2" class="flex h-[77px] shrink-0 items-center border-b-2 border-[#272727] bg-linear-to-b from-[#363636] to-[#303030] pb-px"></div>

  <div class="flex h-[1848px] shrink-0">
    <!-- left docks -->
    <div class="flex w-[584px] shrink-0 flex-col">
      <div class="flex h-[38px] items-center gap-1.5 pr-0.5 pl-1.5"><span class="mr-auto text-[20.500px]">탐색기</span><svg class="size-[22px]"><use href="#float"/></svg><svg class="size-[22px]"><use href="#close"/></svg></div>
      <div class="flex h-[62px] items-center gap-[18px] pb-0.5 pl-3.5">
        <svg class="size-8"><use href="#i-add"/></svg><svg class="size-8"><use href="#i-refresh"/></svg><svg class="size-8"><use href="#i-filter"/></svg><svg class="size-8"><use href="#i-collapse"/></svg><svg class="size-8"><use href="#i-info"/></svg>
      </div>
      <div class="flex h-[788px] overflow-hidden border-y border-[#262626] bg-[#1e1e1e]">
        <div id="tree-rows" class="w-[556px] overflow-hidden pt-px"></div>
        <div class="flex w-7 flex-col bg-[#2b2b2b]">
          <div class="flex h-[26px] items-center justify-center border-2 border-[#555] bg-[#3c3c3c]"><svg class="h-[9px] w-4 rotate-180 fill-[#b8b8b8]"><use href="#dd"/></svg></div>
          <div class="mt-0.5 h-[637px] border-2 border-[#555] bg-[#404040]"></div>
          <div class="h-[94px] bg-[#373737]"></div>
          <div class="flex h-[27px] items-center justify-center border-2 border-[#555] bg-[#3c3c3c]"><svg class="h-[9px] w-4 fill-[#b8b8b8]"><use href="#dd"/></svg></div>
        </div>
      </div>
      <div class="flex h-3.5 items-center pl-[278px]"><svg class="h-1 w-[34px]"><use href="#hdots"/></svg></div>
      <div class="flex h-[38px] items-center gap-1.5 pr-0.5 pl-1.5"><span class="mr-auto text-[20.500px]">레이어</span><svg class="size-[22px]"><use href="#float"/></svg><svg class="size-[22px]"><use href="#close"/></svg></div>
      <div class="flex h-[62px] items-center gap-[18px] pl-3.5">
        <svg class="size-8"><use href="#i-brush"/></svg><svg class="size-8"><use href="#i-group"/></svg><svg class="size-8"><use href="#i-eye"/></svg><svg class="size-8"><use href="#i-filterd"/></svg><svg class="size-8"><use href="#i-expr"/></svg><svg class="-ml-1.5 h-[9px] w-4 fill-[#a9a9a9]"><use href="#dd"/></svg><svg class="-ml-[5px] size-8"><use href="#i-expand"/></svg><svg class="size-8"><use href="#i-collapse"/></svg><svg class="size-8"><use href="#i-remove"/></svg>
      </div>
      <div class="h-[844px] border-t-2 border-[#262626] bg-[#1e1e1e]">
        <div class="flex h-9 items-center bg-[#0058d0]">
          <div class="ml-[46px] flex size-7 items-center justify-center rounded-xs border border-[#2b2b2b] bg-[#1d1d1d]"><svg class="size-5 fill-none stroke-[#cfcfcf] stroke-[3]" viewBox="0 0 20 20"><path d="M3 11l5 6 8-15"/></svg></div>
          <div class="ml-3 size-8 border border-[#4a3a55] bg-[#8c5999]"></div>
          <div class="ml-1.5 flex h-full flex-1 items-center bg-linear-to-b from-[#166be0] to-[#0a5cd4] pl-1.5"><span class="mt-0.5 border-b-[3px] border-white text-[26.200px] leading-[29px] font-bold text-[#eaf2ff]">buildings</span></div>
        </div>
        <div class="flex h-9 items-center">
          <div class="ml-[46px] flex size-7 items-center justify-center rounded-xs border border-[#282828]"><svg class="size-5 fill-none stroke-[#cfcfcf] stroke-[3]" viewBox="0 0 20 20"><path d="M3 11l5 6 8-15"/></svg></div>
          <div class="ml-3 h-[3px] w-8 bg-[#729b6f]"></div>
          <span class="ml-3 text-[26px] font-bold">roads</span>
        </div>
      </div>
    </div>
    <div class="flex w-4 shrink-0 items-start justify-center pt-[913px]"><svg class="ml-1 h-[34px] w-1"><use href="#vdots"/></svg></div>

    <!-- map and log -->
    <div class="flex w-[1710px] shrink-0 flex-col pt-0.5">
      <svg class="h-[1584px] w-[1710px] shrink-0 bg-white" viewBox="714 290 1710 1584">
        <g fill="none" stroke="#729b6f" stroke-width="3" stroke-linejoin="round">
          <g transform="translate(740 620) scale(1.07143 .59949)" class="[&_path]:[vector-effect:non-scaling-stroke]">
            <path d="M13 174L20 178 28 177 45 197 60 215 75 225 98 248 112 239 132 251 140 264 150 268 163 287 174 289 192 304 214 298 236 297 254 313 266 328 303 365 313 362 340 380 345 394 356 398 370 420 386 437 409 457 425 462 451 481 470 487 492 489 510 487 530 478 590 450 604 417 630 415"/>
            <path d="M451 481L447 500 442 510 439 526M492 489L487 502M492 489L497 508 499 517"/>
            <path d="M1073 426L1077 411 1090 398 1150 352 1197 316 1245 262 1254 257 1267 257 1272 236 1280 216 1283 205 1296 206 1318 212 1343 213 1346 209 1357 210 1361 216 1380 219 1402 225 1430 223 1467 219 1480 226 1495 237 1508 242 1518 243 1535 247"/>
            <path d="M1022 412L1073 426 1095 436 1104 449 1127 489 1140 500 1162 512"/>
            <path d="M578 627L577 660 598 708 599 722 595 742 580 792 567 832 555 863 553 920 550 950 541 1005 543 1060 545 1082 562 1125 575 1175 595 1232 612 1295 638 1378 641 1420 639 1435 632 1450 625 1475 625 1487 628 1498"/>
            <path d="M1015 568L1018 585 1018 635 1022 665 1028 705 1033 765 1041 777 1060 845 1073 905 1087 960 1097 1000 1104 1045 1101 1100 1087 1123 1079 1180 1080 1188 1075 1223 1077 1235 1088 1255 1098 1290 1105 1298"/>
            <path d="M1015 568L988 628 980 662 974 680 977 702 975 718 965 726 964 736"/>
            <path d="M1013 241L1015 250 1021 257 1045 239 1065 232 1090 224 1115 221 1137 200 1152 202"/>
          </g>
          <g transform="translate(1060 620) scale(.44643 .33333)" class="[&_path]:[vector-effect:non-scaling-stroke]">
            <path d="M170 150L178 170 174 183 161 192 174 225 187 232 188 265 235 278 252 281 270 297 300 325 345 344 380 346 400 360 428 386 457 394 490 426 518 452 550 462 590 490 670 521 720 552 742 582 772 606"/>
            <path d="M188 265L170 280 160 283 134 300 112 332 95 360 90 374M235 278L205 293 175 312 140 346 125 368 110 376 96 374"/>
            <path d="M425 170L430 168 438 190 446 200 465 202 462 185 470 170 490 166 520 163 560 170 590 180 620 191 645 186 690 195 716 213 716 226 738 250 748 240 770 244 784 236 795 244 808 240 825 248 855 252 900 250 950 242 965 230 1000 232 1020 240 1050 242 1085 247"/>
            <path d="M965 230L985 205 997 172 982 166 990 150 980 130 978 98 955 94 940 104"/>
            <path d="M1210 80L1225 84 1240 92 1290 105 1297 120 1280 142 1240 163 1215 168 1180 165 1162 182 1170 200 1165 234 1140 240 1110 260 1097 278"/>
            <path d="M1297 125L1330 145 1342 165 1375 175 1392 192 1417 200 1415 225 1410 248 1395 256 1415 270 1447 286 1440 294 1390 300 1335 323 1300 318 1252 310 1248 328 1220 336 1170 328 1142 340 1132 362"/>
            <path d="M1110 260L1145 262 1180 256 1220 258 1247 278 1290 280 1310 298 1335 323"/>
            <path d="M1085 247L1097 290 1115 325 1132 362 1120 385 1128 400 1118 415 1100 402 1075 412 1085 428 1062 435 1120 428 1152 420 1175 440 1200 480 1200 530 1180 598M1120 420L1118 440 1122 458"/>
            <path d="M1200 525L1222 490 1226 475 1250 480M1222 490L1240 495 1255 510 1257 545 1273 575 1258 628"/>
            <path d="M1335 458L1330 530 1330 580 1344 596M1330 587L1310 600 1300 645"/>
            <path d="M772 606L810 604 850 594M492 1307L565 1233 625 1190 665 1130 700 1062 760 985 800 920 835 875 850 800 865 750 900 680 940 640 1000 608 1050 596 1120 584 1180 598 1300 645 1400 685 1520 733 1560 733"/>
            <path d="M1060 576L1110 576 1120 584M1300 645L1290 655 1325 700 1358 700 1367 710"/>
            <path d="M1120 585L1097 608 1097 630 1120 695 1170 770 1255 845 1300 880 1440 995 1473 1108M1120 700L1112 716 1104 706M1170 765L1147 795 1155 820 1172 835"/>
            <path d="M1393 818L1420 832 1445 825 1490 785 1510 748M1380 840L1325 838 1300 880 1180 893 1150 900 1110 932 1085 937M1255 845L1180 885 1172 915"/>
            <path d="M1300 880L1345 866 1375 868 1400 885 1412 920 1445 950 1452 970 1445 1000 1415 1020 1408 1050 1375 1078 1350 1076 1300 1060 1255 1048 1235 1030 1225 1000 1208 970 1190 935"/>
            <path d="M1300 880L1225 1010 1140 1160 1095 1250M1300 880L1285 950 1250 968M1062 932L1075 958 1103 978 1113 930M1103 978L1120 1100 1130 1145 1190 1215 1220 1268M1103 978L1040 1080"/>
            <path d="M1217 895L1208 925 1155 950 1133 1010 1142 1070 1156 1085 1140 1110 1130 1145 1115 1163 1040 1180"/>
            <path d="M1255 1048L1247 1100 1228 1140 1235 1180 1220 1200 1190 1215M1228 1140L1285 1225 1280 1260"/>
            <path d="M1473 1108L1460 1150 1430 1195 1413 1218 1385 1212 1355 1215 1320 1238 1280 1262 1258 1288 1225 1287 1220 1270 1185 1285 1172 1312 1140 1285 1110 1255 1085 1240 1050 1225 1005 1215 990 1190 992 1168 1030 1130"/>
            <path d="M1185 1285L1270 1248 1285 1262M1083 1175L1092 1210 1088 1240M1005 1215L1040 1180 1045 1160 1035 1140M1005 1170L1020 1140M1040 1180L992 1168M1000 1165L1015 1160 1010 1175Z"/>
            <path d="M838 880L855 920 855 1000 845 1060 832 1090 835 1115 848 1128 852 1110 860 1060 880 1038 905 1060 920 1078 960 1076 1000 1085 1022 1062 1035 1075 1036 1100 1048 1120 1030 1135M895 1030L915 1072 960 1080 1000 1092 1020 1070 1028 1100 1010 1095M855 948L880 980 910 980 914 1000 890 1035"/>
            <path d="M788 1247L820 1225 840 1190 865 1170 878 1110 935 1097 965 1120 1000 1124 1001 1135M680 1100L700 1110 670 1126 670 1190"/>
            <path d="M820 870L780 920M850 852L838 890M755 947L785 938M770 952L762 982M812 870L840 882M820 868L822 820 850 760M772 606L777 630 775 680 790 708 830 730 860 790M733 748L790 750 812 715M806 730L812 788"/>
            <path d="M768 290L800 298 812 335 812 400 835 460 860 505 872 508M812 335L845 335 870 360 865 395 840 420 830 390 835 372 830 340M870 360L900 345 925 292 905 372 925 392 945 370 940 300 925 292M818 248L840 265 855 292 885 296 900 318 920 262M920 262L948 280 945 320 968 318 1000 315 985 255 1000 232M870 355L915 310M865 362L905 335 920 300M900 250L900 258 925 265"/>
            <path d="M1000 315L1005 340 950 345 955 320 948 380M1005 340L1055 345 1110 320M1020 300L1055 345 1060 290 1078 272M1055 345L1062 380 1060 440 1020 440M960 345L1000 360 1008 410 1018 418 1035 380 1055 340M1018 345L1025 420 1005 440 1012 490M1000 350L1015 385 1005 405M1020 350L1012 400M960 345L1020 350M975 320L965 340 1015 345"/>
            <path d="M1060 380L1120 380 1128 355M1072 372L1085 350 1110 340 1095 370 1115 380 1100 385M1080 362L1100 345M1090 365L1108 350M1105 320L1075 355M1085 400L1112 405 1078 415"/>
            <path d="M835 460L870 415 890 418 892 450 865 465M885 372L860 410 835 450M865 500L880 475 920 455 960 440 985 465M920 455L922 400M920 455L918 510M938 420L900 475M910 430L935 475M855 450L875 500M930 450L940 440"/>
            <path d="M835 462L815 475 800 530 802 560 818 600M800 540L788 605M780 512L800 518M780 535L800 540M820 600L835 575M1065 440L1102 480 1098 515 1075 520 1062 576M990 718L1010 740 1035 743 1055 768M965 735L968 760M900 820L905 845 945 845M925 660L945 655M1000 575L1012 590"/>
          </g>
          <g transform="translate(1400 620) scale(.38265 .33333)" class="[&_path]:[vector-effect:non-scaling-stroke]">
            <path d="M757 475L750 455 760 443 780 438 785 430 810 437 850 430 885 450 920 468 960 492 968 512 965 590 940 640 912 672M850 430L848 403M915 431L968 420 968 400 1045 416 1062 400 1085 393 1115 378 1145 378M968 400L980 445 1015 460 1035 480 1015 500 985 500 968 512M990 450L965 450 945 468 920 468 885 468M935 458L895 478M1043 431L1028 432 1022 460 985 500"/>
            <path d="M883 485L905 540 928 558 920 590 890 640 882 675M883 542L877 665M883 560L920 570M883 572L965 588M690 520L700 570 780 625 805 635 870 685 905 682 912 672M770 585L782 600 778 620M883 680L883 718M912 675L925 715M925 712L947 705"/>
            <path d="M860 730L885 735 1035 713 1060 715 1135 735M885 740L975 812 995 825 1030 812 1045 795 1125 800M880 745L850 785 795 822 765 832 738 820M975 812L925 890 922 940 880 1030 830 1108M1060 725L1062 738 1045 755 1040 800"/>
            <path d="M1133 745L1122 825 1165 868 1155 930 1125 1005 1115 1018M1113 435L1116 450 1133 460 1095 545 1080 620 1065 715M1020 544L1048 547 1088 572M1050 562L1075 540 1090 570M1060 548L1080 555M1020 594L1060 600 1075 628 1097 650M973 667L1040 660 1047 650M1100 740L1180 670M1145 735L1180 722 1200 708M1110 705L1135 712"/>
            <path d="M910 830C920 815 940 820 965 808L950 845C935 845 920 840 910 830Z" fill="#729b6f"/>
          </g>
        </g>
        <g transform="translate(1060 620) scale(.44643 .33333)" fill="#232323" stroke="#232323" stroke-width="2" stroke-linejoin="round">
          <path d="M850 570L878 533 895 545 888 515 900 505 912 510 920 540 924 500 945 492 960 488 985 465 1000 470 1015 485 1018 500 1035 490 1045 450 1055 455 1065 450 1080 465 1095 490 1085 505 1065 490 1050 520 1040 518 1028 540 1055 572 1040 582 1020 570 1010 560 985 572 980 610 955 620 945 608 905 645 885 645 888 668 870 675 856 662 858 630 850 610Z"/>
          <path d="M915 680L950 662 990 655 1005 655 1020 700 1012 715 1003 712 995 690 985 705 970 702 960 715 948 725 950 750 965 755 968 770 985 775 988 795 965 815 960 832 935 838 903 828 908 800 925 780 930 765 916 752 920 730 910 720Z"/>
          <path d="M850 655L820 715M855 665L812 728" stroke-width="10" stroke-dasharray="14 4" fill="none"/>
          <path d="M925 650L885 690 868 720M940 640L985 600M950 655L990 628M985 590L1025 590M1000 575L1010 600" stroke-width="10" stroke-dasharray="7 5" fill="none"/>
        </g>
        <g fill="none" stroke="#232323" stroke-width="4.500" stroke-linecap="round">
          <path transform="translate(1060 620) scale(.44643 .33333)" class="[vector-effect:non-scaling-stroke]" d="M390 270h6M398 288h0M321 784v6M780 533h0M792 550h0M800 515l6-20M825 555h0M831 570h8M812 628h0M822 606h0M772 688h0M790 688l3 6M775 710h0M806 733v4M800 750h0M818 762v6M848 830h0M785 922l12-12M788 920l10-8M853 950h0M851 1122h0M1030 1118l5 6M922 400v6M928 380h0M948 368h0M945 415h0M962 436h0M976 422h0M988 425l6 4M1053 426v10M1174 428v8M1238 498l5 4M1332 534v8M1322 557h7M1344 596h0M1170 832h6M1175 916h0M868 510h6M918 848h0M845 735h20M838 745h0M1510 678h8M1530 672l8-4"/>
          <path transform="translate(1400 620) scale(.38265 .33333)" class="[vector-effect:non-scaling-stroke]" d="M1490 366h12M1510 363h0M1022 452l5 8M1026 450v8M1048 538h0M1062 536l10-4M1076 536l18 8M1048 562h0M1015 594h12M1047 650h0M1094 648l6 5M1030 680v16M1038 705h22M1045 688l12 10M1068 688h16M1080 703h4M1090 712h0M1100 728l22-10M1105 738h10M1085 737h5M1138 718h6M1130 745h8M1165 722h14M872 674l4 6M885 680h8M902 672v-6M928 720h3M957 741h0M882 752h0M874 766h0M922 772h8M940 764l5 4M963 795h0"/>
        </g>
      </svg>
      <div class="flex h-4 items-center pl-[842px]"><svg class="h-1 w-[34px]"><use href="#hdots"/></svg></div>
      <div class="flex h-[34px] items-center gap-1.5 pr-0.5 pl-1.5"><span class="mr-auto text-[20.500px]">로그 메시지</span><svg class="size-[22px]"><use href="#float"/></svg><svg class="size-[22px]"><use href="#close"/></svg></div>
      <div class="z-10 flex h-[63px] items-end gap-0.5 text-[24px]">
        <div class="flex h-[55px] w-[158px] items-center rounded-t-md border-2 border-b-0 border-[#545454] bg-[#3a3a3a] pl-5 text-[25px]"><span class="w-[77px]">QGIS</span><svg class="size-6"><use href="#tabx"/></svg></div>
        <div class="flex h-[55px] w-[184px] items-center rounded-t-md border-2 border-b-0 border-[#545454] bg-[#3a3a3a] pl-5"><span class="w-[104px]">플러그인</span><svg class="size-6"><use href="#tabx"/></svg></div>
        <div class="flex h-[55px] w-[192px] items-center rounded-t-md border-2 border-b-0 border-[#545454] bg-[#3a3a3a] pl-5"><span class="w-[112px] whitespace-nowrap">일반 속성</span><svg class="size-6"><use href="#tabx"/></svg></div>
        <div class="-mb-0.5 flex h-[63px] w-[162px] items-center rounded-t-md border-2 border-b-0 border-[#5a5a5a] bg-[#424242] pb-0.5 pl-5"><span class="w-[82px]">메시지</span><svg class="size-6"><use href="#tabx"/></svg></div>
      </div>
      <div class="flex h-[147px] border-2 border-[#505050] border-t-[#5a5a5a] bg-[#1e1e1e]">
        <div class="flex-1 overflow-hidden pt-1 pl-[10px] text-[24.700px] leading-8 whitespace-nowrap">
          <div class="h-8">은[는] 무결하지 않거나 인식할 수 없는 데이터소스입니다.</div>
          <div class="flex h-8"><span class="w-[309px] text-[25.700px] tracking-[0.250px] text-[#c80000]">2025-06-09T13:33:10</span><span class="w-[143px] text-[25px] text-[#c80000]">CRITICAL</span><span class="w-[282px]">무결하지 않은 데이터소스 :</span><span class="text-[25.500px]">/Users/mypsyche/Downloads/QGIS-Training-Data-master/exercise_data/</span></div>
          <div class="h-8"><span class="text-[25px]">styles/roads.qml</span> 은[는] 무결하지 않거나 인식할 수 없는 데이터소스입니다.</div>
        </div>
        <div class="mt-0.5 flex w-[30px] flex-col bg-[#2b2b2b]">
          <div class="flex h-[26px] items-center justify-center border-2 border-[#555] bg-[#3c3c3c]"><svg class="h-[9px] w-4 rotate-180 fill-[#c0c0c0]"><use href="#dd"/></svg></div>
          <div class="h-[34px] bg-[#373737]"></div>
          <div class="h-[53px] border-2 border-[#555] bg-[#404040]"></div>
          <div class="mt-0.5 flex h-[26px] items-center justify-center border-2 border-[#555] bg-[#3c3c3c]"><svg class="h-[9px] w-4 fill-[#c0c0c0]"><use href="#dd"/></svg></div>
        </div>
      </div>
    </div>
    <div class="flex w-3.5 shrink-0 items-start justify-center pt-[913px]"><svg class="ml-1.5 h-[34px] w-1"><use href="#vdots"/></svg></div>

    <!-- right docks -->
    <div class="flex w-[922px] shrink-0 flex-col">
      <div class="flex h-[38px] items-center gap-1.5 pr-0.5 pl-2"><span class="mr-auto text-[21.800px]">Search QMS</span><svg class="size-[22px]"><use href="#float"/></svg><svg class="size-[22px]"><use href="#close"/></svg></div>
      <div class="mt-px flex h-[47px] items-center rounded-md border-2 border-[#262626] bg-[#1e1e1e] pt-px pl-[5px] text-[25.200px] text-[#8f8f8f]">Search string...</div>
      <div class="mt-[13px] flex h-[47px] justify-end gap-3.5 text-[25.600px] text-black">
        <div class="flex w-[196px] items-center justify-center rounded-md border-2 border-[#5a5a5a] bg-linear-to-b from-[#464646] to-[#3a3a3a] whitespace-nowrap outline-2 outline-[#262626]">Filter by extent</div>
        <div class="flex w-[155px] items-center rounded-md border-2 border-[#5a5a5a] bg-linear-to-b from-[#464646] to-[#3a3a3a] pr-3.5 pl-2 outline-2 outline-[#262626]"><span class="mr-auto">All</span><svg class="h-2 w-3.5 fill-[#1c1c1c]"><use href="#dd"/></svg></div>
      </div>
      <div class="mt-[13px] h-[516px] border-2 border-[#262626] bg-[#1e1e1e]"></div>
      <div class="mt-2.5 flex h-[67px] items-center justify-center border-2 border-[#292929] pl-1 text-[25.700px]">
        <svg class="mr-[13px] h-8 w-7" viewBox="0 0 28 32"><path d="M14 1c3 0 3.500 3 3.500 3 4.500 2 6 6 6 10 0 5 1 8 3.500 12H1c2.500-4 3.500-7 3.500-12 0-4 1.500-8 6-10 0 0 .5-3 3.500-3z" fill="#ffa726"/><path d="M10 28h8c0 4-8 4-8 0z" fill="#ffa726"/></svg>
        <span class="whitespace-pre"><span class="text-[#4098f7] underline decoration-2 underline-offset-4">Download geodata</span> for your project</span>
      </div>
      <div class="mt-2 flex h-[14px] items-center pl-[448px]"><svg class="h-1 w-[34px]"><use href="#hdots"/></svg></div>
      <div class="-mt-0.5 flex h-[38px] items-center gap-1.5 pr-0.5 pl-2"><span class="mr-auto text-[20.500px]">식별 결과</span><svg class="size-[22px]"><use href="#float"/></svg><svg class="size-[22px]"><use href="#close"/></svg></div>
      <div class="flex h-[62px] items-center pl-[15px]">
        <svg class="size-8"><use href="#i-form"/></svg><div class="mx-[15px] h-8 w-px bg-[#282828]"></div>
        <svg class="size-8"><use href="#i-expand"/></svg><svg class="ml-[18px] size-8"><use href="#i-collapse"/></svg><svg class="ml-[18px] size-8"><use href="#i-expandnew"/></svg><div class="mx-4 h-8 w-px bg-[#282828]"></div>
        <svg class="size-8"><use href="#i-desel"/></svg><div class="mx-[15px] h-8 w-px bg-[#282828]"></div>
        <svg class="size-8"><use href="#i-copy"/></svg><svg class="ml-[18px] size-8"><use href="#i-print"/></svg><div class="mx-4 h-8 w-px bg-[#282828]"></div>
        <svg class="size-8"><use href="#i-idmode"/></svg><svg class="ml-3 h-[9px] w-4 fill-[#a9a9a9]"><use href="#dd"/></svg><svg class="ml-4 size-8"><use href="#i-wrench"/></svg><div class="mx-[15px] h-8 w-px bg-[#282828]"></div>
        <svg class="size-8"><use href="#i-help"/></svg>
      </div>
      <div class="mt-px flex h-9 border-y-2 border-t-[#555] border-b-[#262626] bg-linear-to-b from-[#424242] to-[#383838] text-[20.500px] leading-[33px] font-medium text-black">
        <div class="w-[481px] border-r-2 border-[#5a5a5a] pl-1.5">피처</div><div class="pl-1.5">값</div>
      </div>
      <div class="h-[806px] border-b-2 border-[#262626] bg-[#1e1e1e]"></div>
      <div class="mt-[11px] flex h-12 items-center pr-[9px] pl-2.5 text-[24px]">
        <span class="w-[59px]">모드</span>
        <div class="flex h-[46px] flex-1 items-center rounded-md border-2 border-[#5a5a5a] bg-linear-to-b from-[#464646] to-[#3a3a3a] pr-[15px] pl-2 text-black outline-2 outline-[#262626]"><span class="mr-auto">현재 레이어</span><svg class="h-2 w-3.5 fill-[#1c1c1c]"><use href="#dd"/></svg></div>
      </div>
      <div class="mt-[14px] flex h-12 items-center pl-2.5 text-[24px] text-[#6a6a6a]">
        <span class="w-[59px]">보기</span>
        <div class="flex h-[46px] w-[156px] items-center rounded-md border-2 border-[#525252] bg-linear-to-b from-[#464646] to-[#3a3a3a] pr-[15px] pl-2 text-[#232323] outline-2 outline-[#262626]"><span class="mr-auto">트리</span><svg class="h-2 w-3.5 fill-[#2c2c2c]"><use href="#dd"/></svg></div>
      </div>
    </div>
  </div>

  <!-- status bar -->
  <div class="relative flex h-[60px] shrink-0 items-center pt-1 text-[20.500px] whitespace-nowrap [&>*]:shrink-0">
    <div class="mr-[976px] ml-1 flex h-[47px] w-[667px] items-center rounded-md border-2 border-[#262626] bg-[#1e1e1e] pl-[18px] text-[24.500px] text-[#9a9a9a]"><svg class="mr-3.5 size-[25px] fill-none stroke-[#aaa] stroke-2" viewBox="0 0 24 24"><circle cx="10" cy="10" r="8"/><path d="M16 16l7 7"/></svg>위치를 찾으려면 입력하십시오 (⌘K)</div>
    <span class="w-[45px] font-medium">좌표</span>
    <div class="flex h-[46px] w-[249px] items-center rounded-md border-2 border-[#262626] bg-[#1e1e1e] pl-[14px] text-[22.500px] tracking-[0.200px]">-34.2633°,20.5753°</div>
    <svg class="ml-2.5 h-8 w-8" viewBox="0 0 32 32"><path d="M3 3c3-3 8-2 8 3l1 7c4 1 8 3 9 7 1 5-2 9-6 9s-6-3-5-8c1-3 0-6-3-8C4 11 0 7 3 3z" fill="#f0f0f0" stroke="#000" stroke-width="2.500"/><path d="M5 5l3 7M9 3v8M14 19c4 0 5 3 4 7M12 25l4-6" stroke="#000" stroke-width="2" fill="none"/><path d="M20 6c-3 8 8 8 9 14 0 6-4 9-9 9" fill="none" stroke="#c9b8b8" stroke-width="2"/><path d="M22 3h0M27 2h0M25 7h0M2 19h0M5 23h0" stroke="#000" stroke-width="2.500" stroke-linecap="round"/></svg>
    <span class="ml-[26px] w-[43px] font-bold">축척</span>
    <div class="flex h-[47px] w-[184px] rounded-md border-2 border-[#262626] bg-[#1e1e1e] pl-[5px] text-[23px] leading-[43px]"><span class="flex-1">1:229862</span><div class="flex w-10 items-center justify-center rounded-r-md border-2 border-[#5a5a5a] bg-linear-to-b from-[#4a4a4a] to-[#3a3a3a]"><svg class="h-2 w-3.5 fill-[#1c1c1c]"><use href="#dd"/></svg></div></div>
    <svg class="ml-6 h-8 w-[26px]" viewBox="0 0 26 32"><path d="M6 14V9a7 7 0 0 1 14 0v5" fill="none" stroke="#d8d8d8" stroke-width="3"/><rect x="2" y="13" width="22" height="18" rx="3" fill="#777"/></svg>
    <span class="ml-[17px] w-[65px] font-bold">확대경</span>
    <div class="flex h-[47px] w-[184px] items-center rounded-md border-2 border-[#262626] bg-[#1e1e1e] pl-[7px] text-[23px]"><span class="flex-1">200%</span><svg class="mr-[21px] h-5 w-7" viewBox="0 0 28 20"><path d="M8 0h18a2 2 0 0 1 2 2v16a2 2 0 0 1-2 2H8L0 10z" fill="#b5b5b5"/><path d="M12 5l10 10M22 5L12 15" stroke="#222" stroke-width="2.400"/></svg><div class="flex h-full w-[27px] flex-col items-center justify-center gap-[11px] rounded-r-md border-2 border-[#5a5a5a] bg-linear-to-b from-[#4a4a4a] to-[#3a3a3a]"><svg class="h-2 w-3.5 rotate-180 fill-[#b5b5b5]"><use href="#dd"/></svg><svg class="h-2 w-3.5 fill-[#b5b5b5]"><use href="#dd"/></svg></div></div>
    <span class="ml-[19px] w-[57px] font-medium">회전</span>
    <div class="flex h-[46px] w-[183px] items-center rounded-md border-2 border-[#262626] bg-[#1e1e1e] pl-[8px] text-[23px]"><span class="flex-1">0.0 °</span><div class="flex h-full w-[27px] flex-col items-center justify-center gap-[11px] rounded-r-md border-2 border-[#5a5a5a] bg-linear-to-b from-[#4a4a4a] to-[#3a3a3a]"><svg class="h-2 w-3.5 rotate-180 fill-[#b5b5b5]"><use href="#dd"/></svg><svg class="h-2 w-3.5 fill-[#b5b5b5]"><use href="#dd"/></svg></div></div>
    <div class="ml-[15px] flex size-[27px] items-center justify-center rounded-xs border border-[#282828] bg-[#1e1e1e]"><svg class="size-5 fill-none stroke-[#cfcfcf] stroke-[3]" viewBox="0 0 20 20"><path d="M3 11l5 6 8-15"/></svg></div>
    <span class="ml-[11px] w-[88px] font-medium">렌더링</span>
    <svg class="h-[29px] w-[32px]" viewBox="0 0 32 30"><ellipse cx="16" cy="14" rx="15" ry="8" fill="#bdbdbd"/><ellipse cx="16" cy="14" rx="10" ry="13" fill="#bdbdbd"/><path d="M16 1v26M10 3c-3 8-3 14 0 22M22 3c3 8 3 14 0 22M1 11h30M1 17h30" stroke="#555" stroke-width="1.500" fill="none"/></svg>
    <span class="ml-1 w-[162px] text-[22.200px] text-black">EPSG:4326</span>
    <div class="flex h-12 w-[46px] items-center justify-center rounded-md border-2 border-[#555] bg-[#3a3a3a] outline-2 outline-[#262626]"><svg class="h-8 w-9" viewBox="0 0 36 32"><path d="M17 1c9 0 16 6 16 13 0 4-2 7-4 9l2 8-7-4c-2 1-5 1-7 1C8 28 1 22 1 14S8 1 17 1z" fill="#7a7a7a"/></svg></div>
    <svg class="absolute right-0.5 bottom-0 size-6 fill-[#7d7d7d]" viewBox="0 0 24 24"><path d="M18 0h3v4h-3zM12 7h3v4h-3zM18 7h3v4h-3zM6 14h3v4H6zM12 14h3v4h-3zM18 14h3v4h-3zM0 20h3v4H0zM6 20h3v4H6zM12 20h3v4h-3z"/></svg>
  </div>
</div>

<script>
  // Toolbars: "|" grip, "/" separator, "v" menu arrow, "*" prefix marks a pressed button.
  const grip = first => `<div class="${first ? 'w-[23px] pl-[7px]' : 'w-8 pl-[17px]'} shrink-0"><svg class="h-[34px] w-2.5"><use href="#grip"/></svg></div>`;
  const item = (t, i) => {
    if (t === '|') return grip(i === 0);
    if (t === '/') return '<div class="flex w-3.5 shrink-0 justify-center"><div class="h-9 w-px bg-[#282828]"></div></div>';
    if (t === 'v') return '<div class="flex w-6 shrink-0 justify-center pr-0.5"><svg class="mt-0.5 h-2 w-[15px] fill-[#b0b0b0]"><use href="#dd"/></svg></div>';
    const on = t[0] === '*';
    return `<div class="mx-0.5 flex size-[62px] shrink-0 items-center justify-center ${on ? 'rounded-md border-2 border-[#4e4e4e] bg-[#353535] outline-2 outline-[#232323]' : ''}"><svg class="size-12 shrink-0"><use href="#i-${on ? t.slice(1) : t}"/></svg></div>`;
  };
  const fill = (id, s) => document.getElementById(id).innerHTML = s.trim().split(/\s+/).map(item).join('');
  fill('tb1', '| file open save layout layoutmgr style | *hand pansel zin zout zfull zsel zlayer znative zlast znext mapnew map3d bknew bk clock refresh | select v selform v desel v selloc v | identify abacus gear sigma table v ruler v tip action v');
  fill('tb2', '| layers gpkgnew vnew feathernew memnew meshnew gpxnew | pencils pencil saveedit digit v poly vertex v attr trash cut copy paste undo redo | abc diagram / abpin abcred / lpin leye lmove lrot ledit | wadd *wsearch wbin | python | help |');

  // Browser tree: state, icon, label
  const rows = [['>','t-folder','/Volumes'],['','t-star','즐겨찾기'],['>','i-bk','공간 북마크'],['>','t-home','홈'],['>','t-folder','/ (Macintosh HD)'],['>','i-gpkg','GeoPackage'],['','i-feather','SpatiaLite'],['','t-pg','PostgreSQL'],['','t-hana','SAP HANA'],['','t-stac','STAC'],['>','t-mssql','MS SQL 서버'],['>','t-oracle','Oracle'],['','i-wms','WMS/WMTS'],['','t-vt','벡터 타일'],['','t-scene','신'],['','t-cloud','Cloud'],['','t-sensor','SensorThings'],['o','t-xyz','XYZ Tiles'],['c','t-xyz','Mapzen Global Terrain'],['c','t-xyz','OpenStreetMap'],['s','t-xyz','구글위성지도'],['','i-wcs','WCS']];
  document.getElementById('tree-rows').innerHTML = rows.map(([s, ic, t]) => {
    const arrow = s === '>' ? '<svg class="h-4 w-2"><use href="#rtri"/></svg>' : s === 'o' ? '<svg class="-ml-1 h-2 w-4 fill-[#b0b0b0]"><use href="#dd"/></svg>' : '';
    const size = /^[가-힣]/.test(t) ? 'text-[24.300px]' : 'text-[25.600px]';
    const cell = s === 'c' || s === 's' ? 'w-[70px]' : 'w-[38px]';
    return `<div class="flex h-9 items-center ${s === 's' ? 'w-[396px] bg-[#464646] text-white' : ''}"><div class="${cell} flex shrink-0 items-center pl-3">${arrow}</div><svg class="size-8 shrink-0"><use href="#${ic}"/></svg><span class="ml-3 whitespace-nowrap ${size}">${t}</span></div>`;
  }).join('');
</script>
</body>
</html>
